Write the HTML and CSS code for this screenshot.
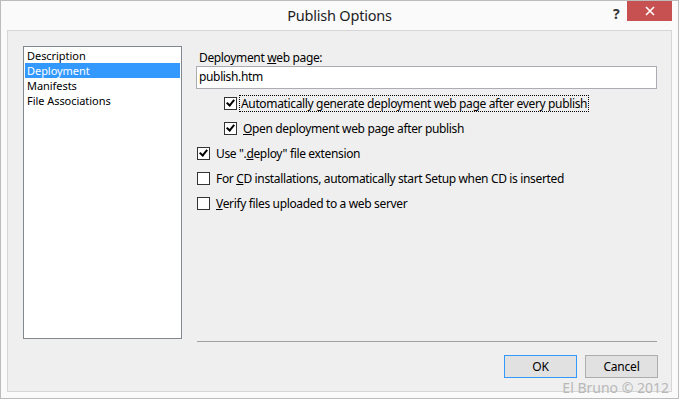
FILE: index.html
```html
<!DOCTYPE html>
<html lang="en">
<head>
  <meta charset="UTF-8">
  <title>Publish Options</title>
  <link rel="stylesheet" href="styles.css">
</head>
<body>
  <div class="window">
    <div class="titlebar">
      <span class="title">Publish Options</span>
      <span class="help">?</span>
      <span class="close">
        <svg width="10" height="10" viewBox="0 0 10 10"><path d="M1 1 L9 9 M9 1 L1 9" stroke="#fff" stroke-width="1.6"/></svg>
      </span>
    </div>
    <div class="client">
      <ul class="list">
        <li>Description</li>
        <li class="selected">Deployment</li>
        <li>Manifests</li>
        <li>File Associations</li>
      </ul>
      <div class="panel">
        <div class="label">Deployment <u>w</u>eb page:</div>
        <div class="textbox">publish.htm</div>
        <div class="options">
          <div class="row indent">
            <span class="box checked"></span>
            <span class="text focus">Automatically <u>g</u>enerate deployment web page after every publish</span>
          </div>
          <div class="row indent">
            <span class="box checked"></span>
            <span class="text"><u>O</u>pen deployment web page after publish</span>
          </div>
          <div class="row">
            <span class="box checked"></span>
            <span class="text">Use ".<u>d</u>eploy" file extension</span>
          </div>
          <div class="row">
            <span class="box"></span>
            <span class="text">For <u>C</u>D installations, automatically start Setup when CD is inserted</span>
          </div>
          <div class="row">
            <span class="box"></span>
            <span class="text"><u>V</u>erify files uploaded to a web server</span>
          </div>
        </div>
        <div class="separator"></div>
        <div class="buttons">
          <button class="default">OK</button>
          <button>Cancel</button>
        </div>
      </div>
    </div>
    <div class="watermark">El Bruno © 2012</div>
  </div>
</body>
</html>
```

FILE: styles.css
```css
body {
  margin: 0;
  font-family: "Noto Sans", "Open Sans", sans-serif;
  font-size: 12px;
  letter-spacing: -0.35px;
  color: #000;
  background: #fff;
}
.window {
  position: relative;
  width: 679px;
  height: 399px;
  box-sizing: border-box;
  border: 1px solid #bcbcbc;
  background: #fafafa;
  display: flex;
  flex-direction: column;
}
.titlebar {
  position: relative;
  height: 29px;
  display: flex;
  align-items: center;
  justify-content: center;
}
.title {
  font-size: 14.5px;
  letter-spacing: -0.2px;
  color: #1e1e1e;
  margin-top: -1px;
}
.help {
  position: absolute;
  left: 612px;
  top: 3px;
  font-weight: bold;
  font-size: 14px;
  color: #333;
}
.close {
  position: absolute;
  left: 626px;
  top: 0;
  width: 45px;
  height: 20px;
  background: #c75050;
  display: flex;
  align-items: center;
  justify-content: center;
}
.client {
  flex: 1;
  margin: 0 6px 6px 6px;
  border: 1px solid #d6d6d6;
  background: #efefef;
  padding: 15px 13px 13px 15px;
  display: flex;
  gap: 14px;
}
.list {
  list-style: none;
  margin: 0;
  padding: 1px;
  width: 159px;
  height: 293px;
  box-sizing: border-box;
  border: 1px solid #828790;
  background: #fff;
}
.list li {
  height: 15px;
  line-height: 15px;
  padding-left: 2px;
  font-size: 11px;
  letter-spacing: -0.05px;
}
.list li.selected {
  background: #3399ff;
  color: #fff;
}
.panel {
  flex: 1;
  display: flex;
  flex-direction: column;
}
.label {
  margin-top: 4px;
  height: 15px;
  line-height: 15px;
  padding-left: 3px;
}
.textbox {
  margin-top: 1px;
  height: 23px;
  box-sizing: border-box;
  border: 1px solid #abadb3;
  background: #fff;
  line-height: 20px;
  padding-left: 2px;
  margin-right: 1px;
}
.options {
  padding-top: 2px;
}
.row {
  height: 25px;
  display: flex;
  align-items: center;
  padding-left: 1px;
}
.row.indent {
  padding-left: 28px;
}
.box {
  width: 13px;
  height: 13px;
  box-sizing: border-box;
  border: 1px solid #333;
  background: #fff;
  margin-right: 6px;
  position: relative;
}
.box.checked::after {
  content: "";
  position: absolute;
  left: 3px;
  top: 0;
  width: 3px;
  height: 6px;
  border: solid #000;
  border-width: 0 2px 2px 0;
  transform: rotate(40deg);
}
.text {
  line-height: 15px;
}
.focus {
  outline: 1px dotted #000;
  outline-offset: 0;
  padding: 0 1px;
  margin-left: -3px;
}
.separator {
  margin-top: auto;
  height: 1px;
  background: #a0a0a0;
  margin-left: 1px;
  margin-right: 1px;
}
.buttons {
  margin-top: 13px;
  display: flex;
  justify-content: flex-end;
  gap: 8px;
}
button {
  width: 73px;
  height: 23px;
  font-family: inherit;
  font-size: 12px;
  letter-spacing: -0.2px;
  background: #e1e1e1;
  border: 1px solid #adadad;
  padding: 0;
  color: #000;
}
button.default {
  border-color: #3399ff;
}
.watermark {
  position: absolute;
  right: 9px;
  bottom: 1px;
  font-size: 14px;
  letter-spacing: 0;
  color: #b8b8b8;
}
```
